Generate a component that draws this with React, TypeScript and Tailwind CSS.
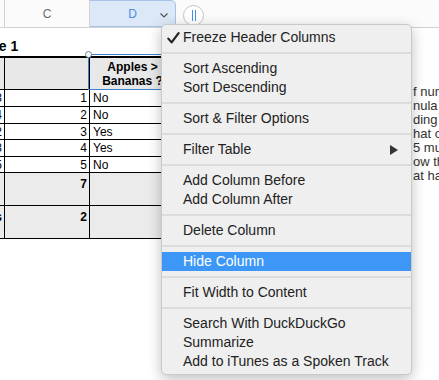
import React from 'react';

type Row = { a: string; b: string; d: string; h: string };

const BODY: Row[] = [
  { a: '3', b: '1', d: 'No', h: 'h-[17px]' },
  { a: '4', b: '2', d: 'No', h: 'h-[17px]' },
  { a: '2', b: '3', d: 'Yes', h: 'h-[16px]' },
  { a: '3', b: '4', d: 'Yes', h: 'h-[17px]' },
  { a: '5', b: '5', d: 'No', h: 'h-[16px]' },
];

const NOTE = ['f numbers', 'nula for', 'ding', 'hat of', '5 mu', 'ow th', 'at ha'];

type Item = { label: string; check?: boolean; sub?: boolean; active?: boolean } | 'sep';

const MENU: Item[] = [
  { label: 'Freeze Header Columns', check: true },
  'sep',
  { label: 'Sort Ascending' },
  { label: 'Sort Descending' },
  'sep',
  { label: 'Sort & Filter Options' },
  'sep',
  { label: 'Filter Table', sub: true },
  'sep',
  { label: 'Add Column Before' },
  { label: 'Add Column After' },
  'sep',
  { label: 'Delete Column' },
  'sep',
  { label: 'Hide Column', active: true },
  'sep',
  { label: 'Fit Width to Content' },
  'sep',
  { label: 'Search With DuckDuckGo' },
  { label: 'Summarize' },
  { label: 'Add to iTunes as a Spoken Track' },
];

const ContextMenu: React.FC = () => (
  <div className="absolute left-[161px] top-[24px] w-[251px] rounded-[5px] bg-[#efefef] border border-[#c9c9c9] shadow-[0_4px_14px_rgba(0,0,0,0.25)] py-[3px] text-[14px] text-[#222] font-['Liberation_Sans',Arial,sans-serif]">
    {MENU.map((item, i) =>
      item === 'sep' ? (
        <div key={i} className="h-[12px] flex items-center">
          <div className="h-[2px] w-full bg-[#dcdcdc]" />
        </div>
      ) : (
        <div
          key={i}
          className={`relative h-[19px] flex items-center pl-[21px] pr-[12px] ${
            item.active ? 'bg-[#3d97f7] text-white' : ''
          }`}
        >
          {item.check && (
            <svg className="absolute left-[5px] top-[4px]" width="13" height="12" viewBox="0 0 13 12">
              <path d="M1.3 6.6 L4.6 10.4 L11.6 1.2" fill="none" stroke="#222" strokeWidth="2.2" strokeLinecap="round" strokeLinejoin="round" />
            </svg>
          )}
          <span>{item.label}</span>
          {item.sub && (
            <svg className="ml-auto mr-[1px]" width="8" height="10" viewBox="0 0 8 10">
              <path d="M0 0 L8 5 L0 10 Z" fill="#333" />
            </svg>
          )}
        </div>
      )
    )}
  </div>
);

const App: React.FC = () => {
  return (
    <div className="relative w-[439px] h-[380px] overflow-hidden bg-white font-['Liberation_Sans',Arial,sans-serif]">
      {/* Column header bar */}
      <div className="flex h-[28px] bg-[#fbfbfb] border-b border-[#d3d3d3]">
        <div className="w-[5px] border-r border-[#d3d3d3]" />
        <div className="w-[85px] flex items-center justify-center text-[12px] text-[#6b6b6b] border-r border-[#d3d3d3]">C</div>
        <div className="relative w-[86px] flex items-center justify-center text-[12px] text-[#4a8fe0] bg-[#dce8f8] border border-l-0 border-[#a7c4e8] rounded-r-[5px]">
          D
          <svg className="absolute right-[7px] top-[12px]" width="8" height="5" viewBox="0 0 8 5">
            <path d="M0.5 0.5 L4 4 L7.5 0.5" fill="none" stroke="#555" strokeWidth="1.2" />
          </svg>
        </div>
        <div className="ml-[7px] mt-[5px] w-[21px] h-[21px] rounded-full border border-[#c4c4c4] bg-white flex items-center justify-center gap-[2px]">
          <div className="w-[1px] h-[11px] bg-[#4a8fe0]" />
          <div className="w-[1px] h-[11px] bg-[#4a8fe0]" />
        </div>
      </div>

      {/* Table title */}
      <div className="h-[28px] flex items-end pb-[3px] overflow-hidden">
        <span className="ml-[-29px] text-[14px] font-bold text-black leading-none">Table 1</span>
      </div>

      {/* Table */}
      <div className="relative border-t-2 border-black text-[12px] text-black w-[300px]">
        <div className="flex h-[32px] bg-[#e8e8e8] border-b border-black">
          <div className="ml-[-36px] w-[41px] border-r border-black" />
          <div className="w-[85px] border-r border-black" />
          <div className="w-[86px] border-r border-black flex flex-col items-center justify-center font-bold leading-[14px]">
            <span>Apples &gt;</span>
            <span>Bananas ?</span>
          </div>
        </div>
        {BODY.map((r, i) => (
          <div key={i} className={`flex ${r.h} border-b border-black leading-none`}>
            <div className="ml-[-36px] w-[41px] border-r border-black flex items-center justify-end pr-[2px]">{r.a}</div>
            <div className="w-[85px] border-r border-black flex items-center justify-end pr-[2px]">{r.b}</div>
            <div className="w-[86px] border-r border-black flex items-center pl-[3px]">{r.d}</div>
          </div>
        ))}
        <div className="flex h-[33px] bg-[#ebebeb] border-b border-black font-bold leading-none">
          <div className="ml-[-36px] w-[41px] border-r border-black" />
          <div className="w-[85px] border-r border-black flex justify-end pr-[2px] pt-[5px]">7</div>
          <div className="w-[86px] border-r border-black" />
        </div>
        <div className="flex h-[33px] bg-[#ebebeb] border-b border-black font-bold leading-none">
          <div className="ml-[-36px] w-[41px] border-r border-black flex justify-end pr-[2px] pt-[5px]">s</div>
          <div className="w-[85px] border-r border-black flex justify-end pr-[2px] pt-[5px]">2</div>
          <div className="w-[86px] border-r border-black" />
        </div>
        {/* selection outline on column D header */}
        <div className="absolute left-[88px] top-[-4px] w-[120px] h-[36px] border border-[#3f7fd0]" />
        <div className="absolute left-[85px] top-[-7px] w-[7px] h-[7px] rounded-full bg-white border border-[#6c7f99]" />
      </div>

      {/* Text box on the canvas, mostly hidden by the menu */}
      <div className="absolute left-[413px] top-[85px] text-[13px] leading-[14px] text-[#333] whitespace-nowrap">
        {NOTE.map((l, i) => (
          <div key={i}>{l}</div>
        ))}
      </div>

      <ContextMenu />
    </div>
  );
};

export default App;
